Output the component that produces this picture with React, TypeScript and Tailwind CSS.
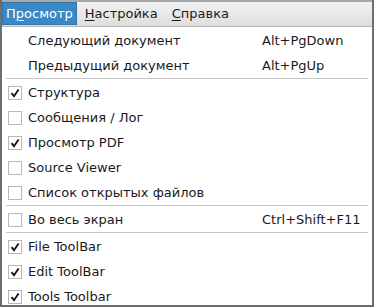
import React from "react";

type Item =
  | { kind: "item"; label: string; shortcut?: string; check?: boolean; checkable?: boolean }
  | { kind: "sep" };

const items: Item[] = [
  { kind: "item", label: "Следующий документ", shortcut: "Alt+PgDown" },
  { kind: "item", label: "Предыдущий документ", shortcut: "Alt+PgUp" },
  { kind: "sep" },
  { kind: "item", label: "Структура", checkable: true, check: true },
  { kind: "item", label: "Сообщения / Лог", checkable: true },
  { kind: "item", label: "Просмотр PDF", checkable: true, check: true },
  { kind: "item", label: "Source Viewer", checkable: true },
  { kind: "item", label: "Список открытых файлов", checkable: true },
  { kind: "sep" },
  { kind: "item", label: "Во весь экран", shortcut: "Ctrl+Shift+F11", checkable: true },
  { kind: "sep" },
  { kind: "item", label: "File ToolBar", checkable: true, check: true },
  { kind: "item", label: "Edit ToolBar", checkable: true, check: true },
  { kind: "item", label: "Tools Toolbar", checkable: true, check: true },
];

const CheckBox = ({ checked }: { checked?: boolean }) => (
  <span className="flex w-[14px] h-[14px] items-center justify-center border border-[#b8b8b8] bg-white">
    {checked && (
      <svg width="10" height="10" viewBox="0 0 10 10">
        <path d="M1.5 5.2 L4 8.2 L8.6 1.4" fill="none" stroke="#111" strokeWidth="1.8" />
      </svg>
    )}
  </span>
);

export default function App() {
  return (
    <div
      className="w-[374px] h-[307px] overflow-hidden bg-white border-x-2 border-b-2 border-[#6e6e6e] text-[13px] text-[#1a1a1a]"
      style={{ fontFamily: '"DejaVu Sans", sans-serif' }}
    >
      <div className="h-[27px] flex items-end border-t-2 border-[#a8a8a8] border-b border-b-[#b4b4b4] bg-gradient-to-b from-[#f2f2f2] to-[#dedede]">
        <div className="h-[23px] mb-[1px] px-[3px] flex items-center bg-[#3a88c4] border border-[#2f74aa] text-white">
          П<span className="underline underline-offset-[2px]">р</span>осмотр
        </div>
        <div className="h-[23px] mb-[1px] ml-[5px] px-[3px] flex items-center">
          <span className="underline underline-offset-[2px]">Н</span>астройка
        </div>
        <div className="h-[23px] mb-[1px] ml-[8px] px-[3px] flex items-center">
          <span className="underline underline-offset-[2px]">С</span>правка
        </div>
      </div>
      <div className="pt-[1px]">
        {items.map((it, i) =>
          it.kind === "sep" ? (
            <div key={i} className="h-[2px] mx-[4px] border-t border-[#c6c6c6]" />
          ) : (
            <div key={i} className="h-[25px] flex items-center">
              <div className="w-[26px] pl-[6px] flex items-center">
                {it.checkable && <CheckBox checked={it.check} />}
              </div>
              <div className="w-[234px]">{it.label}</div>
              <div>{it.shortcut}</div>
            </div>
          )
        )}
      </div>
    </div>
  );
}
